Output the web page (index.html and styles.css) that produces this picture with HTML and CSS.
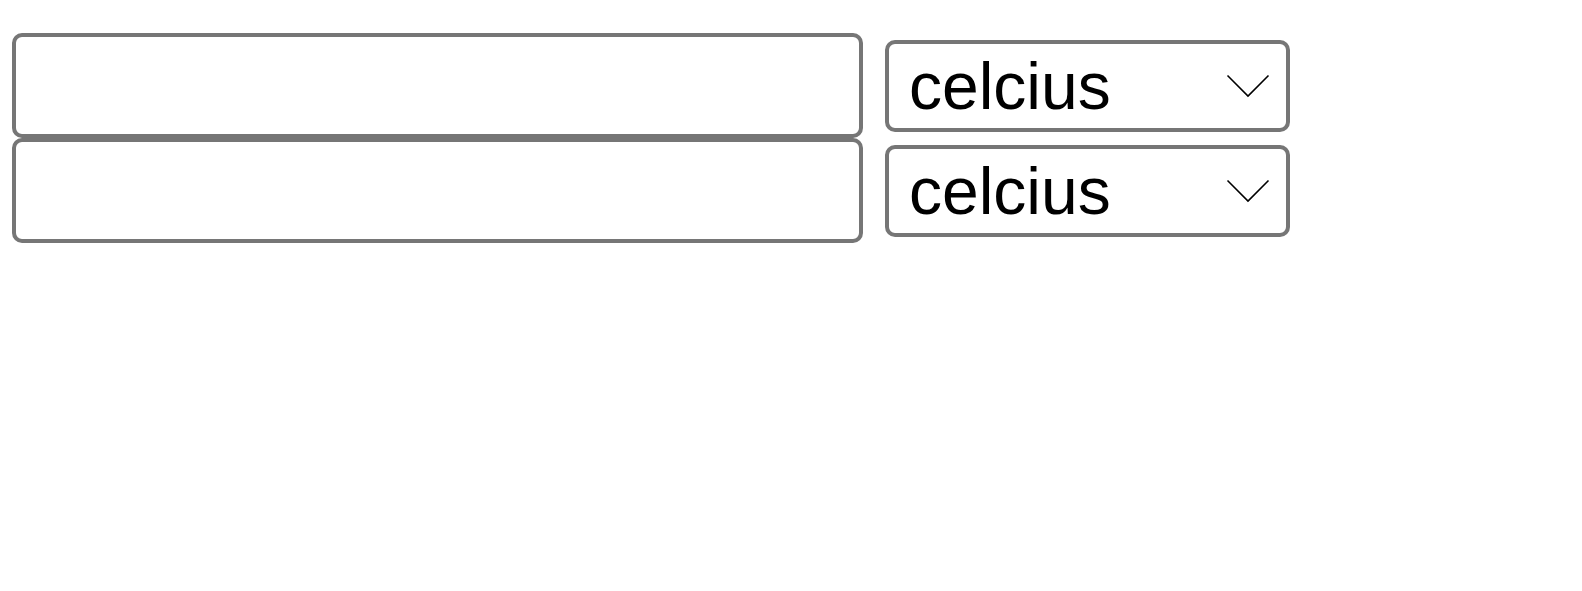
FILE: index.html
```html
<!DOCTYPE html>
<html lang="en">
<head>
<meta charset="utf-8">
<title>Temperature converter</title>
<link rel="stylesheet" href="styles.css">
</head>
<body>
<div class="converter">
  <div class="row">
    <input class="value" type="text">
    <div class="unit">
      <select class="unit-select">
        <option>celcius</option>
        <option>fahrenheit</option>
        <option>kelvin</option>
      </select>
      <svg class="chevron" width="44" height="24" viewBox="0 0 44 24"><polyline points="1.5,1.5 22,22 42.5,1.5" fill="none" stroke="#000" stroke-width="1.6"/></svg>
    </div>
  </div>
  <div class="row">
    <input class="value" type="text">
    <div class="unit">
      <select class="unit-select">
        <option>celcius</option>
        <option>fahrenheit</option>
        <option>kelvin</option>
      </select>
      <svg class="chevron" width="44" height="24" viewBox="0 0 44 24"><polyline points="1.5,1.5 22,22 42.5,1.5" fill="none" stroke="#000" stroke-width="1.6"/></svg>
    </div>
  </div>
</div>
</body>
</html>
```

FILE: styles.css
```css
html, body {
  margin: 0;
  padding: 0;
  background: #fff;
}

.converter {
  display: flex;
  flex-direction: column;
  padding: 33px 0 0 12px;
  font-family: "Liberation Sans", Arial, sans-serif;
}

.row {
  display: flex;
  align-items: center;
  gap: 22px;
  height: 105px;
}

.value {
  box-sizing: border-box;
  width: 851px;
  height: 105px;
  margin: 0;
  border: 4px solid #767676;
  border-radius: 10px;
  background: #fff;
  font-family: inherit;
  font-size: 66px;
  padding: 0 8px;
  outline: none;
}

.unit {
  position: relative;
  width: 405px;
  height: 92px;
}

.unit-select {
  appearance: none;
  -webkit-appearance: none;
  box-sizing: border-box;
  width: 100%;
  height: 100%;
  margin: 0;
  border: 4px solid #767676;
  border-radius: 10px;
  background: #fff;
  color: #000;
  font-family: inherit;
  font-size: 66px;
  line-height: normal;
  padding: 0 0 0 20px;
  outline: none;
}

.chevron {
  position: absolute;
  left: 341px;
  top: 34px;
  pointer-events: none;
}
```
